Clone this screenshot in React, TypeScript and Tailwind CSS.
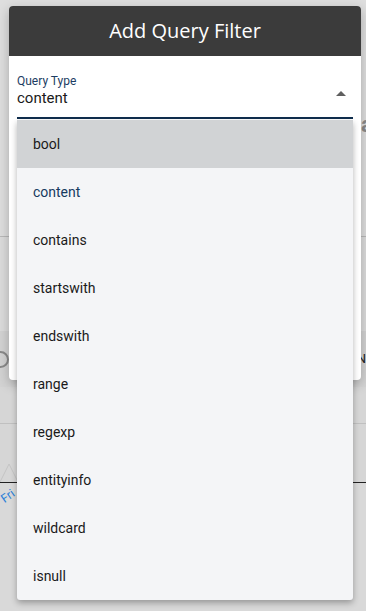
import { useState } from "react";

const OPTIONS = [
  "bool",
  "content",
  "contains",
  "startswith",
  "endswith",
  "range",
  "regexp",
  "entityinfo",
  "wildcard",
  "isnull",
];

export default function App() {
  const [selected, setSelected] = useState("content");
  const hovered = "bool";

  return (
    <div
      className="relative h-[611px] w-[366px] overflow-hidden bg-[#dadada]"
      style={{ fontFamily: "Roboto, 'Liberation Sans', sans-serif" }}>
      {/* dimmed page behind the dialog */}
      <div className="flex h-full flex-col">
        <div className="h-[236px] bg-[#dedede]" />
        <div className="h-px bg-[#b9b9b9]" />
        <div className="h-[94px] bg-[#dcdcdc]" />
        <div className="flex h-[56px] items-center bg-[#d3d3d3]">
          <span className="-ml-[8px] h-[17px] w-[17px] rounded-full border-2 border-[#8a8a8a]" />
          <span className="ml-auto text-[13px] text-[#222]">N</span>
        </div>
        <div className="h-[36px] bg-[#d6d6d6]" />
        <div className="h-px bg-[#c0c0c0]" />
        <div className="relative h-[58px] bg-[#d6d6d6]">
          <svg className="absolute bottom-0 left-0" width="20" height="24" viewBox="0 0 20 24">
            <path d="M0 24 L9 6 L18 24" fill="none" stroke="#c4c4c4" strokeWidth="1" />
          </svg>
        </div>
        <div className="h-px bg-[#222]" />
        <div className="relative flex-1 bg-[#d9d9d9]">
          <span className="absolute left-[1px] top-[4px] -rotate-[35deg] text-[12px] text-[#2a7fd8]">Fri</span>
        </div>
      </div>
      <span className="absolute left-[361px] top-[108px] text-[22px] font-bold text-[#8a8a8a]">a</span>

      {/* dialog */}
      <div className="absolute left-[9px] top-[6px] h-[374px] w-[352px] overflow-hidden rounded-[4px] bg-white shadow-[0_4px_12px_rgba(0,0,0,0.25)]">
        <div
          className="flex h-[50px] items-center justify-center bg-[#3b3b3b] text-[20px] text-white"
          style={{ fontFamily: "'Open Sans', Roboto, sans-serif" }}>
          Add Query Filter
        </div>
        <div className="px-2 pt-[17px]">
          <div className="relative border-b-2 border-[#0f2d4d] pb-[10px]">
            <div className="text-[12px] leading-[16px] text-[#1c3d63]">Query Type</div>
            <div className="text-[15px] leading-[18px] text-[#1a1a1a]">{selected}</div>
            <svg className="absolute right-[7px] top-[18px]" width="10" height="5" viewBox="0 0 10 5">
              <path d="M0 5 L5 0 L10 5 Z" fill="#5f5f5f" />
            </svg>
          </div>
        </div>
      </div>

      {/* open select menu */}
      <ul className="absolute left-[17px] top-[120px] w-[336px] rounded-b-[3px] bg-[#f4f5f7] shadow-[0_3px_6px_rgba(0,0,0,0.3)]">
        {OPTIONS.map((opt) => (
          <li
            key={opt}
            onClick={() => setSelected(opt)}
            className={
              "flex h-[48px] cursor-pointer items-center px-4 text-[14px] " +
              (opt === hovered ? "bg-[#d1d3d5] text-[#1a1a1a]" : "") +
              (opt === selected ? "text-[#163a5f]" : "") +
              (opt !== hovered && opt !== selected ? "text-[#1a1a1a]" : "")
            }>
            {opt}
          </li>
        ))}
      </ul>
    </div>
  );
}
